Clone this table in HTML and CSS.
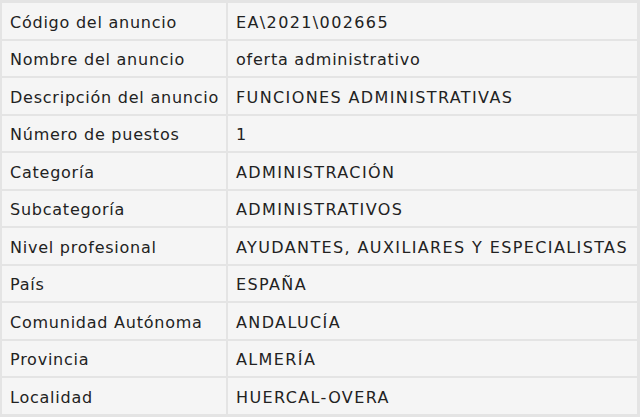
FILE: index.html
```html
<!DOCTYPE html>
<html lang="es">
<head>
<meta charset="utf-8">
<link rel="stylesheet" href="styles.css">
</head>
<body>
<table class="info">
  <tbody>
    <tr><td class="label">Código del anuncio</td><td class="value caps">EA\2021\002665</td></tr>
    <tr><td class="label">Nombre del anuncio</td><td class="value">oferta administrativo</td></tr>
    <tr><td class="label">Descripción del anuncio</td><td class="value caps">FUNCIONES ADMINISTRATIVAS</td></tr>
    <tr><td class="label">Número de puestos</td><td class="value caps">1</td></tr>
    <tr><td class="label">Categoría</td><td class="value caps">ADMINISTRACIÓN</td></tr>
    <tr><td class="label">Subcategoría</td><td class="value caps">ADMINISTRATIVOS</td></tr>
    <tr><td class="label">Nivel profesional</td><td class="value caps">AYUDANTES, AUXILIARES Y ESPECIALISTAS</td></tr>
    <tr><td class="label">País</td><td class="value caps">ESPAÑA</td></tr>
    <tr><td class="label">Comunidad Autónoma</td><td class="value caps">ANDALUCÍA</td></tr>
    <tr><td class="label">Provincia</td><td class="value caps">ALMERÍA</td></tr>
    <tr><td class="label">Localidad</td><td class="value caps">HUERCAL-OVERA</td></tr>
  </tbody>
</table>
</body>
</html>
```
FILE: styles.css
```css
html, body {
  margin: 0;
  padding: 0;
  background: #e4e4e4;
}
body {
  padding-top: 1px;
  font-family: "DejaVu Sans", Verdana, sans-serif;
  font-size: 16px;
  color: #222;
}
.info {
  border-collapse: separate;
  border-spacing: 2px;
  width: 639px;
  table-layout: fixed;
}
.info td {
  background: #f5f5f5;
  height: 35.5px;
  padding: 3px 8px 0;
  box-sizing: border-box;
  vertical-align: middle;
  line-height: 19px;
  white-space: nowrap;
  overflow: visible;
  letter-spacing: 0.76px;
}
.info .label {
  width: 224px;
}
.info .caps {
  letter-spacing: 1.38px;
}
```
